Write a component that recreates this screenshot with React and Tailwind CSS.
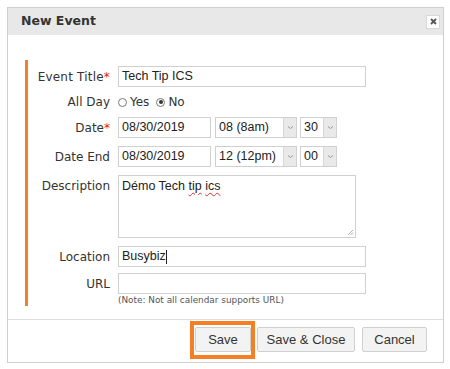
import React from "react";

const labelCls = "w-[82px] shrink-0 text-right text-[12px] text-[#333] whitespace-nowrap";
const inputCls = "h-[21px] border border-[#d0d0d0] bg-white flex items-center pl-[3px] text-[12.5px] text-[#222] font-['Liberation_Sans',Arial,sans-serif]";

function Select({ value, w }) {
  return (
    <div className={`h-[21px] border border-[#d0d0d0] bg-white flex ${w}`}>
      <div className="flex-1 flex items-center pl-[3px] text-[12.5px] text-[#222] font-['Liberation_Sans',Arial,sans-serif]">{value}</div>
      <div className="w-[13px] bg-[#e9e9e9] border-l border-[#d6d6d6] flex items-center justify-center">
        <svg width="7" height="5" viewBox="0 0 7 5"><path d="M1 1.5 L3.5 3.5 L6 1.5" stroke="#999" strokeWidth="1" fill="none" /></svg>
      </div>
    </div>
  );
}

function Radio({ checked }) {
  return (
    <span className="inline-flex w-[9px] h-[9px] rounded-full border border-[#777] items-center justify-center mr-[3px]">
      {checked && <span className="w-[4px] h-[4px] rounded-full bg-[#333]" />}
    </span>
  );
}

export default function App() {
  return (
    <div className="w-[450px] h-[369px] bg-white p-[7px] font-['DejaVu_Sans',Verdana,sans-serif]">
      <div className="w-[437px] h-[356px] border border-[#cfcfcf] flex flex-col">
        <div className="h-[27px] bg-[#e8e8e8] flex items-center justify-between pl-[13px] pr-[3px]">
          <span className="text-[12.5px] font-bold text-[#333]">New Event</span>
          <div className="w-[14px] h-[14px] bg-white border border-[#d8d8d8] flex items-center justify-center">
            <svg width="7" height="7" viewBox="0 0 7 7"><path d="M1 1 L6 6 M6 1 L1 6" stroke="#555" strokeWidth="1.8" /></svg>
          </div>
        </div>
        <div className="h-[284px] pt-[25px] pl-[17px]">
          <div className="border-l-[3px] border-[#f47f24] pt-[6px] h-[246px] flex flex-col">
            <div className="flex items-center gap-[8px]">
              <div className={`${labelCls} tracking-[0.2px]`}>Event Title<span className="text-[#e02020]">*</span></div>
              <div className={`${inputCls} w-[248px]`}>Tech Tip ICS</div>
            </div>
            <div className="flex items-center gap-[8px] mt-[8px] h-[14px]">
              <div className={labelCls}>All Day</div>
              <div className="flex items-center text-[12px] text-[#333]">
                <Radio />
                <span>Yes</span>
                <span className="w-[7px]" />
                <Radio checked />
                <span>No</span>
              </div>
            </div>
            <div className="flex items-center gap-[8px] mt-[8px]">
              <div className={labelCls}>Date<span className="text-[#e02020]">*</span></div>
              <div className={`${inputCls} w-[93px]`}>08/30/2019</div>
              <div className="flex gap-[3px] ml-[-4px]">
                <Select value="08 (8am)" w="w-[82px]" />
                <Select value="30" w="w-[37px]" />
              </div>
            </div>
            <div className="flex items-center gap-[8px] mt-[8px]">
              <div className={labelCls}>Date End</div>
              <div className={`${inputCls} w-[93px]`}>08/30/2019</div>
              <div className="flex gap-[3px] ml-[-4px]">
                <Select value="12 (12pm)" w="w-[82px]" />
                <Select value="00" w="w-[37px]" />
              </div>
            </div>
            <div className="flex items-start gap-[8px] mt-[8px]">
              <div className={`${labelCls} pt-[2px]`}>Description</div>
              <div className="relative w-[238px] h-[63px] border border-[#d0d0d0] pl-[3px] pt-[1px] text-[12.5px] text-[#222] font-['Liberation_Sans',Arial,sans-serif]">
                Démo Tech <span className="underline decoration-wavy decoration-[#e03030] decoration-1 underline-offset-2">tip</span> <span className="underline decoration-wavy decoration-[#e03030] decoration-1 underline-offset-2">ics</span>
                <svg className="absolute right-[1px] bottom-[1px]" width="7" height="7" viewBox="0 0 7 7">
                  <path d="M6 1 L1 6 M6 3.5 L3.5 6 M6 5.5 L5.5 6" stroke="#b0b0b0" strokeWidth="1" />
                </svg>
              </div>
            </div>
            <div className="flex items-center gap-[8px] mt-[8px]">
              <div className={labelCls}>Location</div>
              <div className={`${inputCls} w-[248px]`}>Busybiz<span className="inline-block w-px h-[14px] bg-[#222]" /></div>
            </div>
            <div className="flex items-center gap-[8px] mt-[6px]">
              <div className={labelCls}>URL</div>
              <div className={`${inputCls} w-[248px]`}></div>
            </div>
            <div className="pl-[90px] text-[8.9px] text-[#555] mt-[1px] leading-[11px]">(Note: Not all calendar supports URL)</div>
          </div>
        </div>
        <div className="flex-1 border-t border-[#dedede] flex justify-end items-start pt-[7px] pr-[16px] gap-[6px] font-['Liberation_Sans',Arial,sans-serif] text-[13px] text-[#333]">
          <div className="relative">
            <div className="absolute -left-[5px] -right-[4px] -top-[6px] -bottom-[7px] border-[4px] border-[#f47f24]" />
            <button className="w-[56px] h-[25px] border border-[#cfcfcf] bg-[#f3f3f3] rounded-[2px]">Save</button>
          </div>
          <button className="w-[98px] h-[25px] border border-[#cfcfcf] bg-[#f3f3f3] rounded-[2px]">Save &amp; Close</button>
          <button className="w-[65px] h-[25px] border border-[#cfcfcf] bg-[#f3f3f3] rounded-[2px] ml-[1px]">Cancel</button>
        </div>
      </div>
    </div>
  );
}
